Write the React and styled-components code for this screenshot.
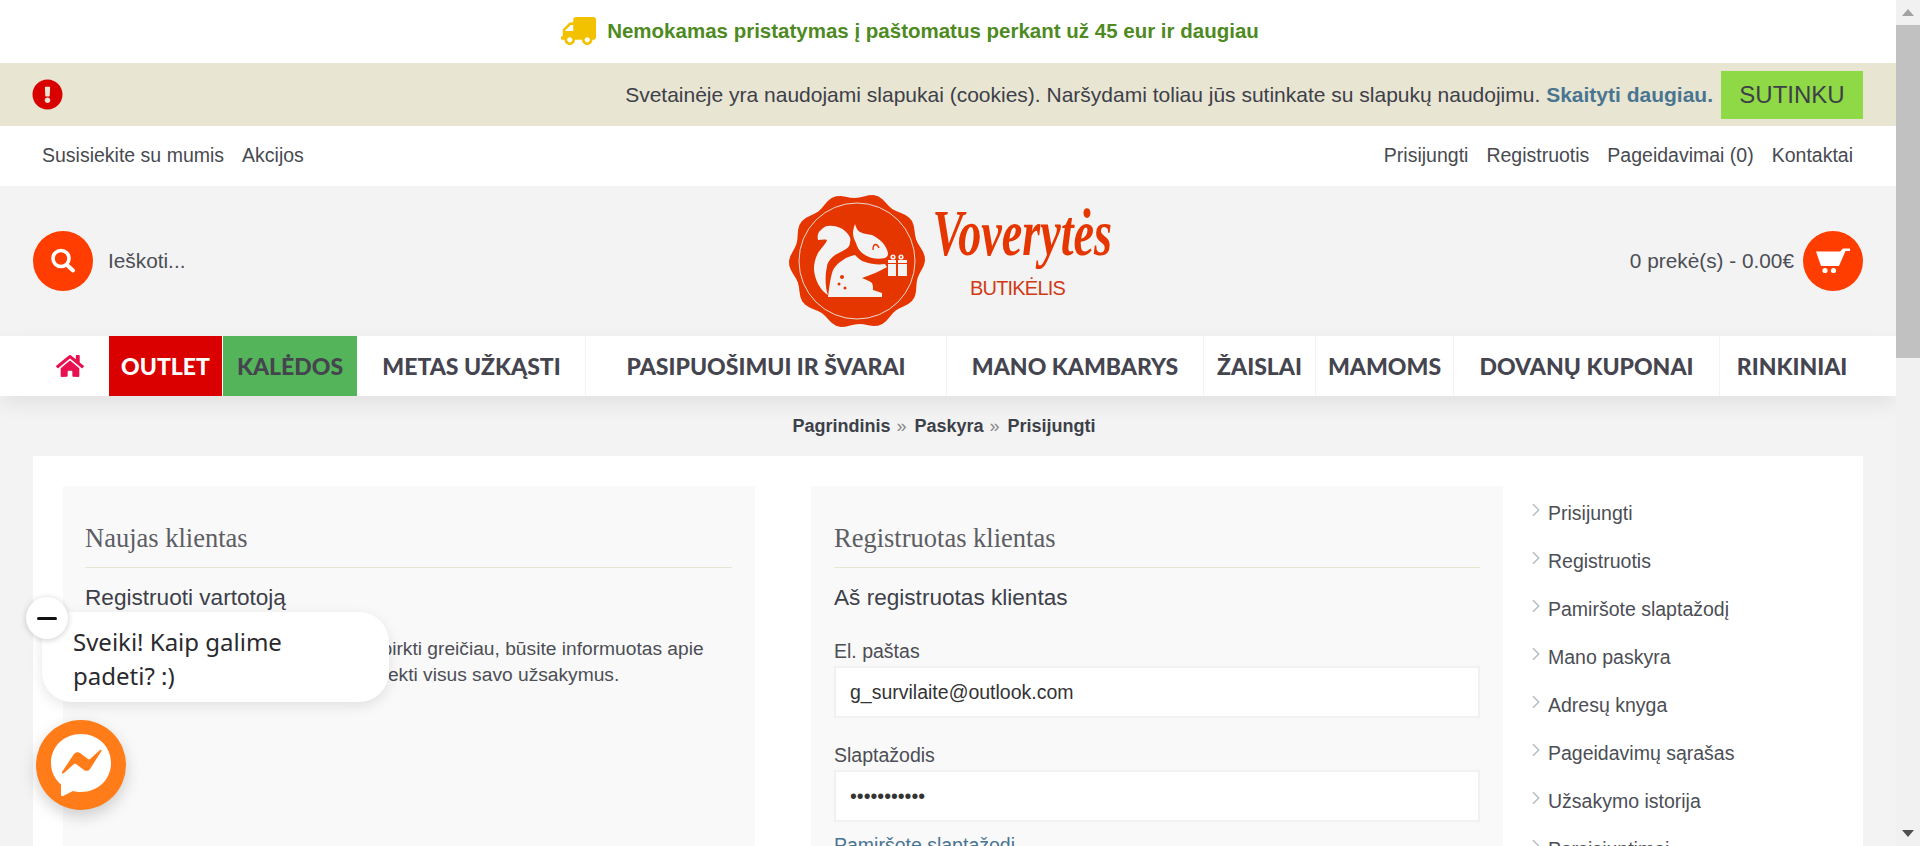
import React from 'react'
import styled, { createGlobalStyle } from 'styled-components'
import { FaTruck, FaHome, FaExclamationCircle } from 'react-icons/fa'
import { ChevronRight } from 'lucide-react'

const GlobalStyle = createGlobalStyle`
  html, body {
    margin: 0;
    height: 100%;
    overflow: hidden;
  }
  body {
    font-family: 'Liberation Sans', Arial, sans-serif;
    color: #3d4049;
  }
  * { box-sizing: border-box; }
`

const navItems = [
  { label: 'METAS UŽKĄSTI', width: 228 },
  { label: 'PASIPUOŠIMUI IR ŠVARAI', width: 361 },
  { label: 'MANO KAMBARYS', width: 257 },
  { label: 'ŽAISLAI', width: 112 },
  { label: 'MAMOMS', width: 138 },
  { label: 'DOVANŲ KUPONAI', width: 266 },
  { label: 'RINKINIAI', width: 144 },
]

const sideLinks = [
  'Prisijungti',
  'Registruotis',
  'Pamiršote slaptažodį',
  'Mano paskyra',
  'Adresų knyga',
  'Pageidavimų sąrašas',
  'Užsakymo istorija',
  'Parsisiuntimai',
]

// wavy edge of the round seal in the logo
const sealPath = () => {
  const pts = []
  for (let i = 0; i < 360; i += 4) {
    const a = (i * Math.PI) / 180
    const r = 65.5 + 2.6 * Math.cos(10 * a + 0.3)
    pts.push(`${(72 + r * Math.cos(a)).toFixed(1)} ${(71 + r * Math.sin(a)).toFixed(1)}`)
  }
  return `M${pts.join('L')}Z`
}

const LogoMark = () => (
  <svg width='145' height='145' viewBox='0 0 145 145'>
    <path d={sealPath()} fill='#e63600' />
    <circle cx='72' cy='71' r='58' fill='none' stroke='#e6d9d2' strokeWidth='1' />
    <g fill='#f3f3f3'>
      <path d='M43 105C35 100 30 90 29 80C29 72 31 67 33 63C36 58 41 54 42 50C39 49 36 50 33 50C32 46 33 42 36 40C38 38 40 36 43 36C50 35 58 38 62 43C65 46 66 49 65 52C65 55 64 57 61 59C56 62 53 63 50 65C45 69 42 73 42 77C40 84 40 98 43 105Z' />
      <path d='M70 34C71 38 73 41 75 42C79 44 83 44 87 45C91 47 94 49 97 52C100 55 102 59 103 63C103 66 102 67 100 68C96 69 91 69 87 68C83 67 80 65 77 63C74 60 72 57 71 53C69 49 68 46 68 43C68 40 69 37 70 34Z' />
      <path d='M43 107C44 99 45 90 47 83C49 77 53 73 58 70C62 67 66 66 70 65C73 68 76 71 80 72C86 74 93 75 100 74L102 77C95 81 86 85 77 88C81 90 85 91 87 93C88 95 88 98 88 100C91 101 94 102 97 103L97 107Z' />
      <path d='M103 74H111V86H103ZM113 74H122V86H113ZM103 70H111V73H103ZM113 70H122V73H113Z' />
      <circle cx='108' cy='67' r='2.6' />
      <circle cx='116' cy='67' r='2.6' />
    </g>
    <g fill='#e63600'>
      <circle cx='57' cy='87' r='2' />
      <circle cx='54' cy='94' r='1.5' />
      <circle cx='60' cy='98' r='1.5' />
      <circle cx='108' cy='67' r='1' />
      <circle cx='116' cy='67' r='1' />
    </g>
    <path d='M88 60C88 53 92 53 94 58' fill='none' stroke='#e63600' strokeWidth='1.4' />
  </svg>
)

const SearchIcon = () => (
  <svg width='32' height='32' viewBox='0 0 32 32' fill='none' stroke='#fff'>
    <circle cx='14' cy='13.5' r='8' strokeWidth='3.6' />
    <path d='M20 20l6 5.5' strokeWidth='4' strokeLinecap='round' />
  </svg>
)

const CartIcon = () => (
  <svg width='36' height='26' viewBox='0 0 36 26' fill='#fff'>
    <path d='M1 3.5H25L28 0.5H35V3H30.5L24 18H6Z' />
    <circle cx='10' cy='22.5' r='2.6' />
    <circle cx='18.5' cy='22.5' r='2.6' />
  </svg>
)

const MessengerIcon = () => (
  <svg width='62' height='64' viewBox='0 0 62 64'>
    <path
      d='M31 1C14 1 1 13.500 1 30C1 39 5 46.500 11 51.500V62C11 63 12 63.500 13 63L23 58C26 58.700 28.500 59 31 59C48 59 61 46.500 61 30C61 13.500 48 1 31 1Z'
      fill='#fff'
    />
    <path
      d='M12 39L24 21C25.500 19 28 18.500 30 20L38 26C38.800 26.500 39.500 26.500 40 26L50 17C51 16.200 52 17 51.500 18L40 36C38.800 38 36 38.500 34 37L26 31C25.200 30.500 24.500 30.500 24 31L14 40C13 41 11.500 40 12 39Z'
      fill='#ff7c19'
    />
  </svg>
)

const App = () => {
  return (
    <Shell>
      <GlobalStyle />
      <Page>
        <Promo>
          <TruckIcon />
          Nemokamas pristatymas į paštomatus perkant už 45 eur ir daugiau
        </Promo>
        <CookieBar>
          <FaExclamationCircle color='#d90000' size={31} />
          <CookieRight>
            <span>
              Svetainėje yra naudojami slapukai (cookies). Naršydami toliau jūs
              sutinkate su slapukų naudojimu.{' '}
              <CookieLink href='#'>Skaityti daugiau.</CookieLink>
            </span>
            <AgreeButton>SUTINKU</AgreeButton>
          </CookieRight>
        </CookieBar>
        <TopLinks>
          <LinkGroup>
            <TopLink>Susisiekite su mumis</TopLink>
            <TopLink>Akcijos</TopLink>
          </LinkGroup>
          <LinkGroup>
            <TopLink>Prisijungti</TopLink>
            <TopLink>Registruotis</TopLink>
            <TopLink>Pageidavimai (0)</TopLink>
            <TopLink>Kontaktai</TopLink>
          </LinkGroup>
        </TopLinks>
        <Header>
          <HeaderSide>
            <RoundButton>
              <SearchIcon />
            </RoundButton>
            <HeaderText>Ieškoti...</HeaderText>
          </HeaderSide>
          <Logo>
            <LogoMark />
            <LogoText>
              <LogoName>Voverytės</LogoName>
              <LogoSub>BUTIKĖLIS</LogoSub>
            </LogoText>
          </Logo>
          <HeaderSide $right>
            <HeaderText>0 prekė(s) - 0.00€</HeaderText>
            <RoundButton>
              <CartIcon />
            </RoundButton>
          </HeaderSide>
        </Header>
        <Nav>
          <HomeItem>
            <FaHome color='#e8114f' size={28} />
          </HomeItem>
          <NavItem $width={114} $bg='#db0000' $color='#fff' $plain>
            OUTLET
          </NavItem>
          <NavItem $width={135} $bg='#54b45a' $plain>
            KALĖDOS
          </NavItem>
          {navItems.map((item) => (
            <NavItem key={item.label} $width={item.width}>
              {item.label}
            </NavItem>
          ))}
        </Nav>
        <Breadcrumb>
          <b>Pagrindinis</b>
          <Sep>»</Sep>
          <b>Paskyra</b>
          <Sep>»</Sep>
          <b>Prisijungti</b>
        </Breadcrumb>
        <Content>
          <Panel>
            <PanelTitle>Naujas klientas</PanelTitle>
            <SubTitle>Registruoti vartotoją</SubTitle>
            <Paragraph>
              Sukūrę savo paskyrą, galėsite apsipirkti greičiau, būsite informuotas apie
              <br />
              savo užsakymo būseną ir galėsite sekti visus savo užsakymus.
            </Paragraph>
          </Panel>
          <Panel>
            <PanelTitle>Registruotas klientas</PanelTitle>
            <SubTitle>Aš registruotas klientas</SubTitle>
            <Field>
              <FieldLabel>El. paštas</FieldLabel>
              <FieldInput type='text' readOnly value='g_survilaite@outlook.com' />
            </Field>
            <Field>
              <FieldLabel>Slaptažodis</FieldLabel>
              <FieldInput type='password' readOnly value='slaptazodis' />
            </Field>
            <ForgotLink href='#'>Pamiršote slaptažodį</ForgotLink>
          </Panel>
          <SideMenu>
            {sideLinks.map((name) => (
              <SideItem key={name}>
                <SideChevron size={22} strokeWidth={1.2} />
                {name}
              </SideItem>
            ))}
          </SideMenu>
        </Content>
        <ChatWidget>
          <ChatBubble>Sveiki! Kaip galime padeti? :)</ChatBubble>
          <ChatClose>
            <i />
          </ChatClose>
          <ChatButton>
            <MessengerIcon />
          </ChatButton>
        </ChatWidget>
      </Page>
      <Scrollbar>
        <ScrollArrow />
        <ScrollThumb />
        <ScrollArrow $down />
      </Scrollbar>
    </Shell>
  )
}

export default App

const Shell = styled.div`
  display: flex;
  width: 100%;
  height: 846px;
  overflow: hidden;
`
const Page = styled.div`
  position: relative;
  flex: 1;
  min-width: 0;
  background: #f3f3f3;
  overflow: hidden;
`
const Scrollbar = styled.div`
  width: 24px;
  display: flex;
  flex-direction: column;
  align-items: center;
  background: #f1f1f1;
`
const ScrollArrow = styled.div`
  height: 25px;
  width: 100%;
  display: flex;
  align-items: center;
  justify-content: center;
  margin-top: ${(p) => (p.$down ? 'auto' : '0')};
  &::before {
    content: '';
    border-left: 6px solid transparent;
    border-right: 6px solid transparent;
    border-bottom: ${(p) => (p.$down ? '0' : '7px solid #a3a3a3')};
    border-top: ${(p) => (p.$down ? '7px solid #505050' : '0')};
  }
`
const ScrollThumb = styled.div`
  width: 100%;
  height: 333px;
  background: #c1c1c1;
`
const Promo = styled.div`
  height: 63px;
  background: #fff;
  display: flex;
  align-items: center;
  justify-content: center;
  gap: 11px;
  padding: 0 76px 2px 0;
  font-size: 20.5px;
  font-weight: 700;
  color: #4e8a1f;
`
const TruckIcon = styled(FaTruck)`
  width: 35px;
  height: 28px;
  color: #f2c100;
  transform: scaleX(-1);
`
const CookieBar = styled.div`
  height: 63px;
  background: #e8e5d2;
  display: flex;
  align-items: center;
  justify-content: space-between;
  padding: 0 33px 0 32px;
  font-size: 21px;
  color: #3d4049;
`
const CookieRight = styled.div`
  display: flex;
  align-items: center;
  gap: 8px;
`
const CookieLink = styled.a`
  color: #4a7591;
  font-weight: 700;
  text-decoration: none;
`
const AgreeButton = styled.button`
  width: 142px;
  height: 48px;
  border: 0;
  background: #8ed945;
  font: 400 24px 'Liberation Sans', Arial, sans-serif;
  color: #3d4049;
`
const TopLinks = styled.div`
  height: 60px;
  background: #fff;
  display: flex;
  align-items: center;
  justify-content: space-between;
  padding: 0 43px 2px 42px;
`
const LinkGroup = styled.div`
  display: flex;
  gap: 18px;
`
const TopLink = styled.span`
  font-size: 19.5px;
  color: #484a50;
`
const Header = styled.div`
  height: 150px;
  padding: 0 33px;
  display: grid;
  grid-template-columns: 1fr auto 1fr;
  align-items: center;
`
const HeaderSide = styled.div`
  display: flex;
  align-items: center;
  justify-content: ${(p) => (p.$right ? 'flex-end' : 'flex-start')};
  gap: ${(p) => (p.$right ? '9px' : '15px')};
`
const RoundButton = styled.div`
  width: 60px;
  height: 60px;
  border-radius: 50%;
  background: #ff3d00;
  display: flex;
  align-items: center;
  justify-content: center;
`
const HeaderText = styled.span`
  font-size: 20.8px;
  color: #4c4e55;
`
const Logo = styled.div`
  display: flex;
  align-items: flex-start;
  margin: 3px 0 0 8px;
`
const LogoText = styled.div`
  width: 190px;
  display: flex;
  flex-direction: column;
  align-items: center;
  margin-top: 8px;
`
const LogoName = styled.span`
  font: italic 700 66px/70px 'Liberation Serif', serif;
  color: #e63600;
  margin-right: 5px;
  transform: scaleX(0.7);
  white-space: nowrap;
`
const LogoSub = styled.span`
  font: 400 20px/24px 'Liberation Sans', Arial, sans-serif;
  letter-spacing: -0.8px;
  color: #cf3a14;
  margin: 8px 14px 0 0;
`
const Nav = styled.nav`
  position: relative;
  z-index: 1;
  height: 60px;
  background: #fff;
  display: flex;
  box-shadow: 0 8px 20px rgba(0, 0, 0, 0.07);
`
const HomeItem = styled.div`
  width: 109px;
  display: flex;
  align-items: center;
  padding-left: 56px;
`
const NavItem = styled.div`
  width: ${(p) => p.$width}px;
  display: flex;
  align-items: center;
  justify-content: center;
  font: 900 23px 'Lato', sans-serif;
  color: ${(p) => p.$color || '#45454f'};
  background: ${(p) => p.$bg || 'transparent'};
  border-right: 1px solid ${(p) => (p.$plain ? '#fff' : '#f3f3f3')};
  white-space: nowrap;
  &:last-child {
    border-right: 0;
  }
`
const Breadcrumb = styled.div`
  height: 60px;
  display: flex;
  align-items: center;
  justify-content: center;
  padding-right: 8px;
  font-size: 18px;
  color: #3d4049;
`
const Sep = styled.span`
  margin: 0 8px 0 6px;
  color: #888;
`
const Content = styled.div`
  margin: 0 33px;
  padding: 30px 0 0 30px;
  background: #fff;
  height: 600px;
  display: flex;
  align-items: flex-start;
`
const Panel = styled.section`
  width: 692px;
  height: 500px;
  margin-right: 56px;
  background: #f9f9f9;
  padding: 30px 23px 30px 22px;
  &:nth-of-type(2) {
    margin-right: 30px;
    padding-left: 23px;
  }
`
const PanelTitle = styled.h2`
  margin: 0;
  height: 52px;
  padding-top: 7px;
  border-bottom: 1px solid #e8e5d2;
  font: 400 26.5px 'Liberation Serif', serif;
  color: #5d5e64;
`
const SubTitle = styled.h3`
  margin: 17px 0 0;
  font: 400 22.6px/26px 'Liberation Sans', Arial, sans-serif;
  color: #3d4049;
`
const Paragraph = styled.p`
  margin: 25px 0 0;
  font-size: 19.2px;
  line-height: 26px;
  color: #4c4e55;
  white-space: nowrap;
`
const Field = styled.div`
  margin-top: 29px;
  &:nth-of-type(2) {
    margin-top: 26px;
  }
`
const FieldLabel = styled.label`
  display: block;
  font-size: 19.5px;
  line-height: 22px;
  margin-bottom: 4px;
  color: #4c4e55;
`
const FieldInput = styled.input`
  display: block;
  width: 100%;
  height: 52px;
  padding: 0 14px;
  border: 2px solid #f1f1f1;
  background: #fff;
  font: 400 19.5px 'Liberation Sans', Arial, sans-serif;
  color: #333;
  outline: none;
`
const ForgotLink = styled.a`
  display: block;
  margin-top: 12px;
  font-size: 19.5px;
  color: #4a7591;
  text-decoration: underline;
`
const SideMenu = styled.ul`
  list-style: none;
  margin: 0;
  padding: 3px 0 0;
`
const SideItem = styled.li`
  height: 48px;
  display: flex;
  align-items: center;
  gap: 1px;
  font-size: 19.5px;
  color: #4c4e55;
  white-space: nowrap;
`
const SideChevron = styled(ChevronRight)`
  color: #a9b7bf;
  margin: -6px 0 0 -8px;
`
const ChatWidget = styled.div`
  position: absolute;
  left: 26px;
  top: 597px;
  z-index: 2;
`
const ChatBubble = styled.div`
  position: absolute;
  left: 16px;
  top: 15px;
  width: 347px;
  height: 90px;
  padding: 13px 31px;
  background: #fff;
  border-radius: 30px;
  box-shadow: 0 4px 14px rgba(0, 0, 0, 0.1);
  font: 400 24px/34px 'Noto Sans', sans-serif;
  color: #2a2a2e;
`
const ChatClose = styled.div`
  position: absolute;
  left: 0;
  top: 0;
  width: 42px;
  height: 42px;
  border-radius: 50%;
  background: #fff;
  box-shadow: 0 1px 6px rgba(0, 0, 0, 0.2);
  display: flex;
  align-items: center;
  justify-content: center;
  i {
    width: 20px;
    height: 3px;
    border-radius: 2px;
    background: #111;
  }
`
const ChatButton = styled.div`
  position: absolute;
  left: 10px;
  top: 123px;
  width: 90px;
  height: 90px;
  border-radius: 50%;
  background: #ff7c19;
  box-shadow: 0 6px 16px rgba(0, 0, 0, 0.18);
  display: flex;
  align-items: center;
  justify-content: center;
`
